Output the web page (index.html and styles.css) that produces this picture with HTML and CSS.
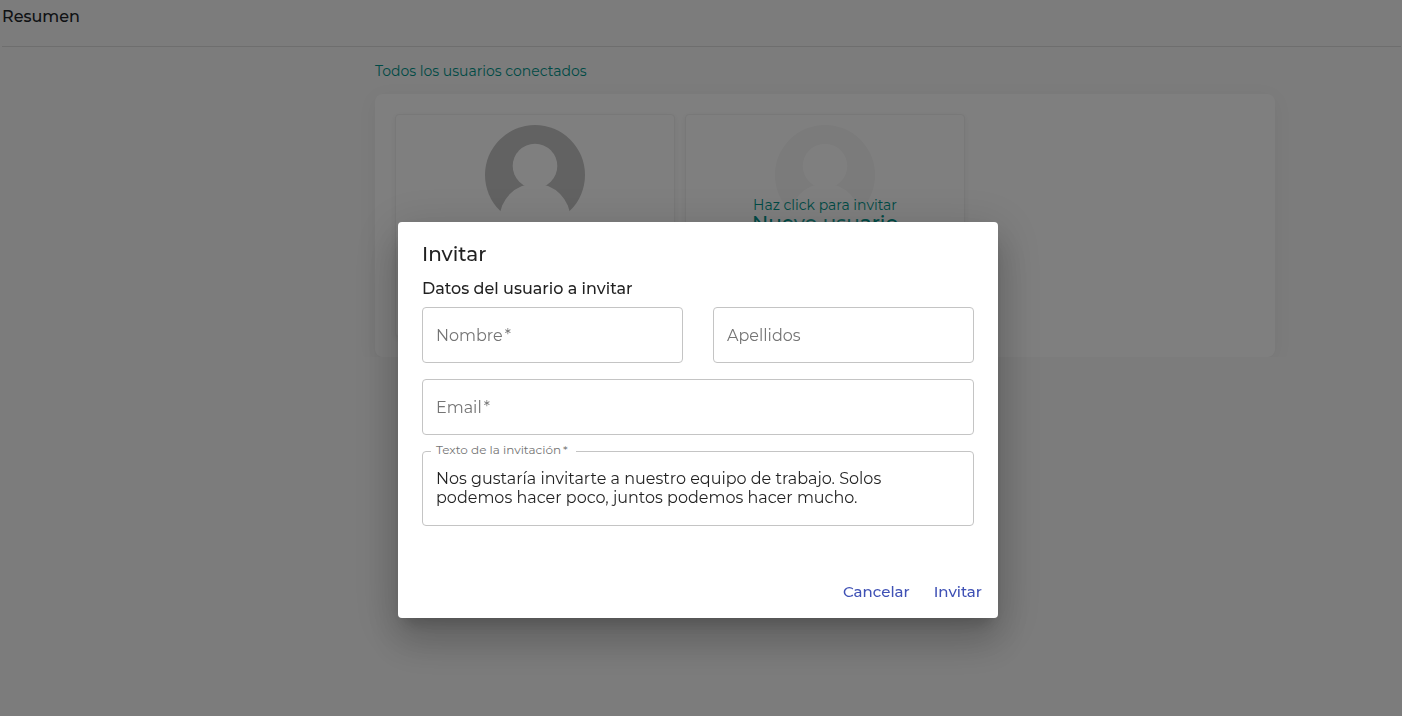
FILE: index.html
```html
<!DOCTYPE html>
<html lang="es">
<head>
<meta charset="utf-8">
<meta name="viewport" content="width=device-width, initial-scale=1">
<title>Resumen</title>
<link rel="stylesheet" href="styles.css">
</head>
<body>
<header class="page-header"><h1 class="page-title">Resumen</h1></header>
<main class="content">
  <section class="users">
    <h2 class="users-title">Todos los usuarios conectados</h2>
    <div class="panel">
      <article class="card">
        <svg class="avatar" viewBox="0 0 100 100" aria-hidden="true">
          <circle cx="50" cy="50" r="50" fill="#c4c4c4"/>
          <circle cx="50" cy="41" r="22.3" fill="#fff"/>
          <circle cx="50" cy="94" r="35.5" fill="#fff"/>
        </svg>
      </article>
      <button class="card card-invite" type="button">
        <svg class="avatar avatar-faded" viewBox="0 0 100 100" aria-hidden="true">
          <circle cx="50" cy="50" r="50" fill="#c4c4c4"/>
          <circle cx="50" cy="41" r="22.3" fill="#fff"/>
          <circle cx="50" cy="94" r="35.5" fill="#fff"/>
        </svg>
        <span class="card-hint">Haz click para invitar</span>
        <span class="card-action">Nuevo usuario</span>
      </button>
    </div>
  </section>
</main>
<div class="overlay">
  <form class="modal" role="dialog" aria-modal="true" aria-labelledby="modal-title">
    <h2 class="modal-title" id="modal-title">Invitar</h2>
    <div class="modal-body">
      <h3 class="modal-subtitle">Datos del usuario a invitar</h3>
      <div class="fields">
        <div class="field">
          <input class="control" id="nombre" type="text">
          <label class="label" for="nombre">Nombre<span class="mark">*</span></label>
        </div>
        <div class="field">
          <input class="control" id="apellidos" type="text">
          <label class="label" for="apellidos">Apellidos</label>
        </div>
        <div class="field field-wide">
          <input class="control" id="email" type="email">
          <label class="label" for="email">Email<span class="mark">*</span></label>
        </div>
        <div class="field field-wide">
          <textarea class="control control-area" id="texto" rows="2">Nos gustaría invitarte a nuestro equipo de trabajo. Solos
podemos hacer poco, juntos podemos hacer mucho.</textarea>
          <label class="label label-raised" for="texto">Texto de la invitación<span class="mark">*</span></label>
        </div>
      </div>
    </div>
    <div class="actions">
      <button class="action" type="button">Cancelar</button>
      <button class="action" type="button">Invitar</button>
    </div>
  </form>
</div>
</body>
</html>
```
FILE: styles.css
```css
* { box-sizing: border-box; }

body {
  margin: 0;
  background: #f8f8f8;
  color: #212529;
  font-family: Montserrat, Inter, sans-serif;
  font-size: 16px;
}

h1, h2, h3 { margin: 0; }
button, input, textarea { font: inherit; }

.page-header {
  height: 47px;
  margin: 0 1px 0 2px;
  padding-top: 6px;
  border-bottom: 1px solid #dcdcdc;
}
.page-title { font-size: 16px; font-weight: 500; line-height: 22px; }

.content { padding: 14px 0 0 248px; }
.users { max-width: 900px; margin: 0 auto; }
.users-title {
  color: #00968c;
  font-size: 14px;
  font-weight: 400;
  line-height: 20px;
}

.panel {
  display: flex;
  align-items: flex-start;
  gap: 10px;
  margin-top: 13px;
  padding: 20px;
  border-radius: 8px;
  background: #fff;
  box-shadow: 0 4px 20px rgba(0, 0, 0, 0.05);
}
.card {
  display: flex;
  flex-direction: column;
  align-items: center;
  width: 280px;
  min-height: 223px;
  padding: 10px;
  border: 1px solid #f0f0f0;
  border-radius: 4px;
  background: #fff;
  box-shadow: 0 2px 6px rgba(0, 0, 0, 0.07);
}
.card-invite { color: #00968c; }
.avatar { flex: none; width: 100px; height: 100px; }
.avatar-faded { opacity: 0.15; }
.card-hint { margin-top: -29px; font-size: 14px; line-height: 18px; z-index: 1; }
.card-action { font-size: 20px; font-weight: 500; line-height: 18px; }

.overlay {
  position: fixed;
  inset: 0;
  display: flex;
  justify-content: center;
  align-items: center;
  padding: 124px 6px 0 0;
  background: rgba(0, 0, 0, 0.5);
  z-index: 2;
}
.modal {
  width: 100%;
  max-width: 600px;
  border-radius: 4px;
  background: #fff;
  color: rgba(0, 0, 0, 0.87);
  box-shadow: 0 11px 15px -7px rgba(0, 0, 0, 0.2), 0 24px 38px 3px rgba(0, 0, 0, 0.14), 0 9px 46px 8px rgba(0, 0, 0, 0.12);
}
.modal-title {
  padding: 16px 24px 8px;
  font-size: 20px;
  font-weight: 500;
  line-height: 32px;
}
.modal-body { padding: 0 24px; }
.modal-subtitle { font-size: 16px; font-weight: 500; line-height: 22px; }

.fields {
  display: grid;
  grid-template-columns: 1fr 1fr;
  gap: 16px 30px;
  margin-top: 7px;
}
.field { position: relative; display: flex; }
.field-wide { grid-column: 1 / -1; }
.control {
  width: 100%;
  min-width: 0;
  height: 56px;
  padding: 0 13px;
  border: 1px solid #c4c4c4;
  border-radius: 4px;
  background: transparent;
  color: inherit;
  outline: none;
}
.control-area {
  height: 75px;
  padding: 17px 13px;
  line-height: 19px;
  resize: none;
  overflow: hidden;
}
.label {
  position: absolute;
  top: 18px;
  left: 14px;
  color: #757575;
  line-height: 22px;
}
.label-raised {
  top: -9px;
  left: 9px;
  padding: 0 8px 0 5px;
  background: #fff;
  font-size: 12px;
  line-height: 16px;
}
.mark { margin-left: 2px; }

.actions {
  display: flex;
  justify-content: flex-end;
  gap: 8px;
  padding: 47px 8px 9px;
}
.action {
  height: 36px;
  padding: 0 8px;
  border: 0;
  border-radius: 4px;
  background: transparent;
  color: #3f51b5;
  font-size: 15px;
  font-weight: 500;
}
```
